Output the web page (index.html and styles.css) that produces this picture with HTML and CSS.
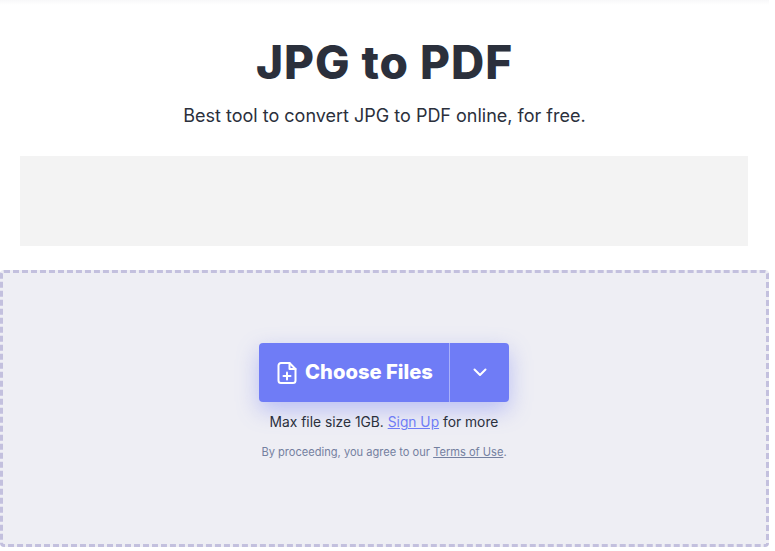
FILE: index.html
```html
<!DOCTYPE html>
<html lang="en">
<head>
    <meta charset="UTF-8">
    <meta name="viewport" content="width=device-width, initial-scale=1.0">
    <title>JPG to PDF</title>
    <link rel="stylesheet" href="styles.css">
</head>
<body>
    <div class="page">
        <div class="top-shade"></div>

        <div class="header">
            <h1>JPG to PDF</h1>
            <p class="subtitle">Best tool to convert JPG to PDF online, for free.</p>
        </div>

        <div class="ad-slot"></div>

        <div class="dropzone">
            <div class="upload-button">
                <div class="choose-files">
                    <svg class="file-icon" viewBox="0 0 20 24" fill="none" stroke="currentColor" stroke-width="2" stroke-linecap="round" stroke-linejoin="round">
                        <path d="M12.5 2H4a2.5 2.5 0 0 0-2.500 2.500v15A2.500 2.500 0 0 0 4 22h12a2.500 2.500 0 0 0 2.500-2.500V8z"/>
                        <path d="M12.500 2v6h6"/>
                        <path d="M10 11.500v7"/>
                        <path d="M6.500 15h7"/>
                    </svg>
                    <span class="choose-label">Choose Files</span>
                </div>
                <div class="more-sources">
                    <svg class="chevron" viewBox="0 0 14 9" fill="none" stroke="currentColor" stroke-width="2" stroke-linecap="round" stroke-linejoin="round">
                        <path d="M1.500 1.500 7 7l5.500-5.500"/>
                    </svg>
                </div>
            </div>
            <p class="limit">Max file size 1GB. <a href="#">Sign Up</a> for more</p>
            <p class="terms">By proceeding, you agree to our <a href="#">Terms of Use</a>.</p>
        </div>
    </div>
</body>
</html>
```

FILE: styles.css
```css
body {
    margin: 0;
    background: #fff;
    color: #2b303c;
    font-family: "Inter", "Noto Sans", sans-serif;
    overflow: hidden;
}

.page {
    width: 769px;
}

.top-shade {
    height: 5px;
    background: linear-gradient(#f8f8f9, #fff);
}

.header {
    text-align: center;
}

.header h1 {
    margin: 0;
    padding-top: 29px;
    font-size: 46px;
    line-height: 56px;
    font-weight: 800;
    letter-spacing: 0.95px;
}

.subtitle {
    margin: 12px 0 0;
    font-size: 18px;
    line-height: 28px;
}

.ad-slot {
    height: 90px;
    margin: 26px 21px 24px 20px;
    background: #f3f3f3;
}

.dropzone {
    box-sizing: border-box;
    height: 277px;
    padding-top: 70px;
    background: #eeeef4;
    border: 3px dashed #c3c0de;
    border-radius: 4px;
    display: flex;
    flex-direction: column;
    align-items: center;
}

.upload-button {
    display: flex;
    width: 250px;
    height: 59px;
    margin-right: 1px;
    background: #6f7cf6;
    color: #fff;
    border-radius: 4px;
    box-shadow: 0 8px 22px rgba(111, 124, 246, 0.42);
}

.choose-files {
    width: 191px;
    padding-left: 2px;
    display: flex;
    align-items: center;
    justify-content: center;
    gap: 8px;
    font-size: 20.200px;
    font-weight: 800;
    border-right: 1px solid #a9b1fa;
    box-sizing: border-box;
}

.choose-label {
    margin-bottom: 3px;
}

.file-icon {
    width: 20px;
    height: 24px;
}

.more-sources {
    flex: 1;
    display: flex;
    align-items: center;
    justify-content: center;
}

.chevron {
    width: 14px;
    height: 9px;
}

.limit {
    margin: 10px 0 0;
    font-size: 13.800px;
    line-height: 20px;
    margin-right: 1px;
}

.limit a {
    color: #6f7cf6;
}

.terms {
    margin: 11px 1px 0 0;
    font-size: 11.100px;
    line-height: 18px;
    color: #7480a0;
}

.terms a {
    color: #7480a0;
}
```
